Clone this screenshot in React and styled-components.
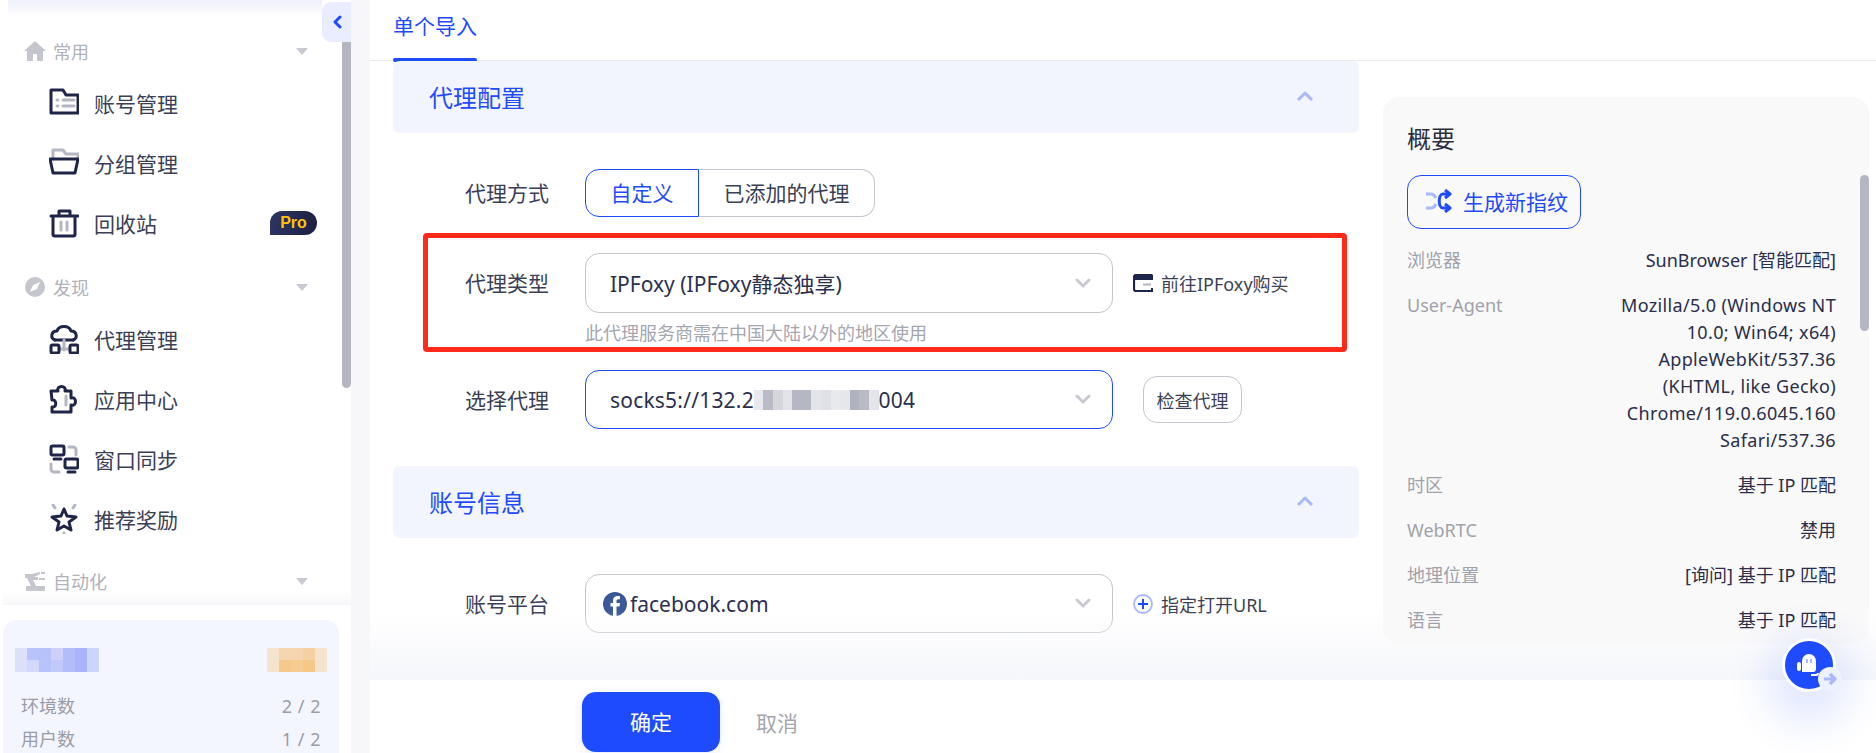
import React from 'react';
import styled, { createGlobalStyle } from 'styled-components';

const NAVY = '#1f2548';
const SOFT = '#b4b6c2';
const BLUE = '#1f4bff';
const PALE = '#a9b8ff';

const GlobalStyle = createGlobalStyle`
  html, body { margin: 0; padding: 0; height: 100%; overflow: hidden; background: #fff; }
  body { font-family: "Noto Sans", "Noto Sans CJK SC", sans-serif; color: #3b3f57; }
  * { box-sizing: border-box; }
`;

const Page = styled.div`
  display: grid;
  grid-template-columns: 351px 19px 1fr;
  grid-template-rows: 753px;
  width: 1876px;
  height: 753px;
  overflow: hidden;
`;

/* sidebar */
const Sidebar = styled.aside`
  position: relative;
  display: flex;
  flex-direction: column;
  min-height: 0;
  background: #fff;
`;

const TopShade = styled.div`
  position: absolute;
  top: 0;
  left: 8px;
  width: 314px;
  height: 16px;
  background: linear-gradient(#eef0fb, #fff);
`;

const Collapse = styled.div`
  position: absolute;
  z-index: 2;
  top: 2px;
  right: 0;
  width: 29px;
  height: 40px;
  display: flex;
  align-items: center;
  justify-content: center;
  background: #e9edff;
  border-radius: 9px 0 0 9px;
`;

const SideThumb = styled.div`
  position: absolute;
  top: 40px;
  right: 0;
  width: 9px;
  height: 348px;
  background: ${SOFT};
  border-radius: 0 0 5px 5px;
`;

const Menu = styled.nav`
  position: relative;
  flex: none;
  height: 605px;
  padding-top: 30px;
  overflow: hidden;
  &::after {
    content: '';
    position: absolute;
    left: 3px;
    right: 0;
    bottom: 0;
    height: 16px;
    background: linear-gradient(rgba(247, 247, 250, 0), #f7f7fa);
  }
`;

const Section = styled.div`
  display: flex;
  align-items: center;
  height: 44px;
  margin-top: ${p => p.$top || 0}px;
  padding: 0 0 2px 24px;
  font-size: 18px;
  color: #b0b2bb;
  svg { flex: none; margin-right: 7px; }
`;

const Caret = styled.span`
  width: 0;
  height: 0;
  margin-left: auto;
  margin-right: 43px;
  border-left: 6px solid transparent;
  border-right: 6px solid transparent;
  border-top: 7px solid #c8c9d2;
`;

const Item = styled.div`
  display: flex;
  align-items: center;
  height: 60px;
  padding: 0 0 2px 49px;
  font-size: 21px;
  color: #3b3f57;
  svg { flex: none; margin-right: 15px; }
`;

const ProBadge = styled.span`
  margin-left: auto;
  margin-right: 34px;
  width: 47px;
  height: 24px;
  display: flex;
  align-items: center;
  justify-content: center;
  font-family: "Liberation Sans", sans-serif;
  font-weight: 700;
  font-size: 16px;
  color: #ffc107;
  background: linear-gradient(100deg, #2d3566, #1b2040);
  border-radius: 12px 12px 12px 0;
`;

const StatsCard = styled.div`
  flex: 1;
  margin: 15px 12px 0 3px;
  padding: 28px 12px 0 12px;
  background: #f3f6ff;
  border-radius: 14px 14px 0 0;
`;

const StatsTop = styled.div`
  display: flex;
  justify-content: space-between;
  margin-bottom: 18px;
`;

const Mosaic = styled.span`
  display: inline-grid;
  grid-template-columns: repeat(${p => p.$cols}, ${p => p.$size}px);
  grid-auto-rows: ${p => p.$rowHeight || p.$size}px;
`;

const Cell = styled.i`
  display: block;
  background: ${p => p.$color};
`;

const StatRow = styled.div`
  display: flex;
  justify-content: space-between;
  height: 33px;
  line-height: 33px;
  padding: 0 6px;
  font-size: 18px;
  color: #9a9ca8;
`;

const StatValue = styled.span`
  letter-spacing: 0.5px;
`;

/* main area */
const Gutter = styled.div`
  background: #f7f7f9;
`;

const Main = styled.main`
  display: flex;
  flex-direction: column;
  min-width: 0;
  min-height: 0;
  background: #fff;
`;

const TabBar = styled.div`
  display: flex;
  flex: none;
  height: 61px;
  padding-left: 23px;
  border-bottom: 1px solid #e9e9ec;
`;

const Tab = styled.div`
  position: relative;
  height: 61px;
  padding-top: 9px;
  font-size: 21px;
  line-height: 34px;
  color: ${BLUE};
  &::after {
    content: '';
    position: absolute;
    left: 0;
    right: 0;
    bottom: -1px;
    height: 4px;
    background: ${BLUE};
    border-radius: 2px;
  }
`;

const Body = styled.div`
  position: relative;
  flex: 1;
  display: flex;
  gap: 24px;
  padding: 0 7px 0 23px;
  min-height: 0;
  &::after {
    content: '';
    position: absolute;
    left: 0;
    right: 0;
    bottom: 0;
    height: 70px;
    background: linear-gradient(rgba(246, 247, 251, 0), #f6f7fb);
    pointer-events: none;
  }
`;

const FormColumn = styled.div`
  position: relative;
  width: 966px;
  flex: none;
  overflow: hidden;
`;

const PanelHeader = styled.div`
  display: flex;
  align-items: center;
  justify-content: space-between;
  height: 72px;
  margin-top: ${p => p.$top || 0}px;
  padding: 0 45px 2px 36px;
  font-size: 24px;
  color: ${BLUE};
  background: #f2f5fe;
  border-radius: 6px;
`;

const FormRow = styled.div`
  display: flex;
  align-items: center;
  margin-top: ${p => p.$top}px;
`;

const Label = styled.label`
  width: 156px;
  margin-right: 36px;
  padding-bottom: 2px;
  flex: none;
  text-align: right;
  font-size: 21px;
  color: #3b3f57;
`;

const Segments = styled.div`
  display: flex;
  height: 48px;
  font-size: 21px;
`;

const Segment = styled.div`
  display: flex;
  align-items: center;
  justify-content: center;
  padding-bottom: 2px;
  width: ${p => (p.$active ? 114 : 176)}px;
  color: ${p => (p.$active ? BLUE : '#3b3f57')};
  border: 1px solid ${p => (p.$active ? BLUE : '#c4c5cd')};
  border-left-width: ${p => (p.$active ? 1 : 0)}px;
  border-radius: ${p => (p.$active ? '14px 0 0 14px' : '0 14px 14px 0')};
`;

const Select = styled.div`
  display: flex;
  align-items: center;
  justify-content: space-between;
  width: 528px;
  height: ${p => p.$height || 60}px;
  padding: 0 21px 0 ${p => p.$pad || 24}px;
  font-size: 21px;
  color: #2c3050;
  border: ${p => (p.$focus ? `1.5px solid ${BLUE}` : '1.5px solid #c4c5cb')};
  border-radius: 14px;
`;

const SelectValue = styled.span`
  display: flex;
  align-items: center;
`;

const ProxyText = styled.span`
  letter-spacing: 0.2px;
`;

const Helper = styled.div`
  margin: 8px 0 0 192px;
  font-size: 18px;
  line-height: 24px;
  color: #a4a6b0;
`;

const Aside = styled.div`
  display: flex;
  align-items: center;
  gap: 8px;
  margin-left: 20px;
  font-size: 18px;
  color: #3b3f57;
`;

const GhostButton = styled.div`
  display: flex;
  align-items: center;
  justify-content: center;
  width: 99px;
  height: 47px;
  margin-left: 30px;
  font-size: 18px;
  color: #3b3f57;
  border: 1px solid #c4c5cd;
  border-radius: 14px;
`;

const Annotation = styled.div`
  position: absolute;
  top: 172px;
  left: 30px;
  width: 924px;
  height: 119px;
  border: 5px solid #ff2a1a;
  border-radius: 4px;
  pointer-events: none;
`;

/* right summary */
const Summary = styled.section`
  position: relative;
  z-index: 1;
  flex: 1;
  align-self: flex-start;
  height: 547px;
  margin-top: 36px;
  padding: 25px 33px 0 24px;
  overflow: hidden;
  background: #f9f9fa;
  border-radius: 16px;
`;

const SummaryThumb = styled.div`
  position: absolute;
  top: 78px;
  right: 0;
  width: 9px;
  height: 156px;
  background: ${SOFT};
  border-radius: 5px;
`;

const SummaryTitle = styled.h2`
  margin: 0;
  font-size: 24px;
  line-height: 34px;
  font-weight: 400;
  color: #2b2e3f;
`;

const NewButton = styled.div`
  display: flex;
  align-items: center;
  gap: 11px;
  width: 174px;
  height: 54px;
  margin: 19px 0 18px;
  padding: 0 0 2px 17px;
  font-size: 21px;
  color: ${BLUE};
  border: 1.5px solid ${BLUE};
  border-radius: 14px;
`;

const InfoRow = styled.div`
  display: flex;
  justify-content: space-between;
  margin-bottom: 18px;
  font-size: 18px;
  line-height: 27px;
`;

const InfoKey = styled.span`
  color: #a0a2ab;
  flex: none;
`;

const InfoValue = styled.span`
  max-width: 240px;
  text-align: right;
  color: #2a2e4a;
  letter-spacing: ${p => (p.$wide ? '0.35px' : 'normal')};
`;

const Footer = styled.footer`
  display: flex;
  flex: none;
  align-items: center;
  height: 73px;
  padding: 0 0 0 212px;
  background: #fff;
`;

const Confirm = styled.div`
  display: flex;
  align-items: center;
  justify-content: center;
  width: 138px;
  height: 60px;
  margin-top: 11px;
  padding-bottom: 2px;
  font-size: 21px;
  color: #fff;
  background: ${BLUE};
  border-radius: 14px;
  box-shadow: 0 2px 10px rgba(31, 75, 255, 0.12);
`;

const Cancel = styled.div`
  margin: 10px 0 0 36px;
  font-size: 21px;
  color: #a4a6b0;
`;

const HelpBubble = styled.div`
  position: absolute;
  z-index: 3;
  top: 638px;
  left: 1782px;
  width: 54px;
  height: 54px;
  display: flex;
  align-items: center;
  justify-content: center;
  background: ${BLUE};
  border: 3px solid #fff;
  border-radius: 50%;
  box-shadow: 0 16px 44px 14px rgba(31, 75, 255, 0.14);
`;

const HelpArrow = styled.div`
  position: absolute;
  right: -9px;
  bottom: -2px;
  width: 24px;
  height: 24px;
  display: flex;
  align-items: center;
  justify-content: center;
  background: #eef1ff;
  border-radius: 50%;
`;

/* icons */
const Svg = ({ size = 30, w, h, children }) => (
  <svg width={w || size} height={h || size} viewBox={`0 0 ${w || size} ${h || size}`} fill="none">
    {children}
  </svg>
);

const navy = { stroke: NAVY, strokeWidth: 3, strokeLinejoin: 'round', strokeLinecap: 'round' };
const soft = { stroke: SOFT, strokeWidth: 3, strokeLinecap: 'round', strokeLinejoin: 'round' };

const HomeIcon = () => (
  <Svg size={22}>
    <path d="M11 1 0 11h3v10h6v-7h4v7h6V11h3z" fill="#c4c5cd" />
  </Svg>
);
const CompassIcon = () => (
  <Svg size={22}>
    <circle cx="11" cy="11" r="10" fill="#c4c5cd" />
    <path d="m16 6-7 3-3 7 7-3z" fill="#fff" />
  </Svg>
);
const RobotIcon = () => (
  <Svg size={22}>
    <path d="M1 4h7l8-2v2l-6 3h4v3H9l3 6H7L3 8H1z M17 2h4v2h-4z M15 8h6v2h-6z" fill="#c4c5cd" />
    <rect x="2" y="16" width="19" height="5" rx="1" fill="#c4c5cd" />
  </Svg>
);
const ListFolderIcon = () => (
  <Svg>
    <path d="M2 2h12l3 5h12v18H2z" {...navy} />
    <path d="M14 12h11M14 18h11" {...soft} />
    <path d="M8 12h1M8 18h1" {...soft} />
  </Svg>
);
const OpenFolderIcon = () => (
  <Svg>
    <path d="M4 11V2h10l3 4h12v5" {...soft} />
    <path d="M1 11h28l-3 14H4z" {...navy} />
  </Svg>
);
const TrashIcon = () => (
  <Svg>
    <path d="M2 8h27M10 7V3h11v4M4 8v18a2 2 0 0 0 2 2h18a2 2 0 0 0 2-2V8" {...navy} />
    <path d="M12 14v8M18 14v8" {...soft} />
  </Svg>
);
const CloudIcon = () => (
  <Svg>
    <path d="M6 16c-5-2-4-9 2-9 2-6 12-6 14 0 6 0 7 7 2 9" {...navy} />
    <path d="M6 16h18" {...navy} />
    <path d="M15 16v10M10 25h10" {...soft} />
    <rect x="2" y="21" width="8" height="8" rx="1.5" {...navy} />
    <rect x="21" y="21" width="8" height="8" rx="1.5" {...navy} />
  </Svg>
);
const PuzzleIcon = () => (
  <Svg>
    <path d="M2 7h7c-2-6 9-6 7 0h6v7c6-2 6 9 0 7v7H3v-5c5 1 5-8 0-7z" {...navy} />
    <path d="M17 12v9" {...soft} />
  </Svg>
);
const SyncIcon = () => (
  <Svg>
    <rect x="2" y="2" width="13" height="9" rx="1.5" {...navy} />
    <path d="M5 15h7" {...navy} />
    <path d="M20 3h4a3 3 0 0 1 3 3v5M2 20v5a3 3 0 0 0 3 3h5" {...soft} />
    <rect x="16" y="15" width="13" height="9" rx="1.5" {...navy} />
    <path d="M19 28h7" {...navy} />
  </Svg>
);
const StarIcon = () => (
  <Svg>
    <path d="m15 5 3 7 9 1-7 5 2 8-7-4-7 4 2-8-7-5 9-1z" {...navy} />
    <path d="M4 1l2 3M26 1l-2 3M15 30v-1" {...soft} />
  </Svg>
);
const ChevronUp = () => (
  <Svg w={18} h={12}>
    <path d="m2 10 7-7 7 7" stroke={PALE} strokeWidth="3" strokeLinejoin="round" />
  </Svg>
);
const ChevronDown = () => (
  <Svg w={16} h={11}>
    <path d="m2 2 6 6 6-6" stroke="#c8c9d0" strokeWidth="3" strokeLinecap="round" />
  </Svg>
);
const ChevronLeft = () => (
  <Svg w={10} h={14}>
    <path d="M8 2 3 7l5 5" stroke={BLUE} strokeWidth="3" strokeLinecap="round" strokeLinejoin="round" />
  </Svg>
);
const WalletIcon = () => (
  <Svg w={20} h={18}>
    <path d="M19 17H3a2 2 0 0 1-2-2V3a2 2 0 0 1 2-2h15a1 1 0 0 1 1 1v3H1" stroke={NAVY} strokeWidth="2.2" />
    <path d="M1 2h18v3H1z" fill={NAVY} />
    <path d="M19 14v3h-3" stroke={NAVY} strokeWidth="2" />
    <path d="M10 10.500h8" stroke={SOFT} strokeWidth="2" />
  </Svg>
);
const PlusCircle = () => (
  <Svg size={20}>
    <circle cx="10" cy="10" r="9" stroke={PALE} strokeWidth="1.8" />
    <path d="M10 5v10M5 10h10" stroke={BLUE} strokeWidth="2" />
  </Svg>
);
const ShuffleIcon = () => (
  <Svg w={27} h={24}>
    <path d="M1 5h5c3 0 4 2 5 4M1 19h5c3 0 4-2 5-4" stroke={PALE} strokeWidth="3" />
    <path d="M23 5h-5c-5 0-5 14 0 14h5" stroke={BLUE} strokeWidth="3" />
    <path d="m20 1 5 4-5 4M20 15l5 4-5 4" stroke={BLUE} strokeWidth="3" strokeLinejoin="round" />
  </Svg>
);
const FacebookIcon = () => (
  <svg width="24" height="24" viewBox="0 0 24 24" style={{ marginRight: 3 }}>
    <circle cx="12" cy="12" r="12" fill="#3b5998" />
    <path d="M13.500 24v-9.500h3l.5-3.500h-3.500V9c0-1 .5-1.700 1.800-1.700H17V4.200C16.600 4.100 15.500 4 14.500 4 12 4 10 5.500 10 8.500V11H7.500v3.500H10V24z" fill="#fff" />
  </svg>
);
const HeadsetIcon = () => (
  <Svg size={28}>
    <path d="M7 21V10a7 7 0 0 1 14 0v8a3 3 0 0 1-3 3H7z" fill="#fff" />
    <rect x="2" y="11" width="4" height="9" rx="2" fill="#fff" />
    <rect x="11" y="8" width="2" height="4" fill={PALE} />
    <rect x="15" y="8" width="2" height="4" fill={PALE} />
    <path d="M16 24h5c1 0 2-1 2-2" stroke="#fff" strokeWidth="2" />
  </Svg>
);
const ArrowRight = () => (
  <Svg size={16}>
    <path d="M2 8h10M8 3l5 5-5 5" stroke={PALE} strokeWidth="3.200" strokeLinejoin="round" />
  </Svg>
);

const bluePixels = ['#dde0fb', '#b9c3fb', '#b7c2fa', '#cfd0f7', '#b3bdfb', '#a9b4fb', '#ccd5fc', '#dde0fb', '#d3d9fb', '#b9c3fb', '#c0c9f9', '#b3bdfb', '#a9b4fb', '#ccd5fc'];
const orangePixels = ['#f5e3cf', '#f5d6b0', '#f5d6b0', '#f5d0a0', '#f5e3d0', '#f5e3cf', '#f5c88c', '#f5cc94', '#f5c888', '#f5e3d0'];
const grayPixels = ['#e8e9ee', '#b9bbc5', '#d4d6dc', '#e2e4e8', '#b5b7c2', '#b5b7c2', '#e4e5ea', '#e0e1e6', '#e8e9ec', '#e6e7eb', '#b0b2bd', '#b8bac4', '#e4e5ea'];

const summaryRows = [
  ['时区', '基于 IP 匹配'],
  ['WebRTC', '禁用'],
  ['地理位置', '[询问] 基于 IP 匹配'],
  ['语言', '基于 IP 匹配'],
];

const pixels = (list) => list.map((color, i) => <Cell key={i} $color={color} />);

const App = () => {
  return (
    <Page>
      <GlobalStyle />
      <Sidebar>
        <TopShade />
        <SideThumb />
        <Collapse><ChevronLeft /></Collapse>
        <Menu>
          <Section><HomeIcon />常用<Caret /></Section>
          <Item><ListFolderIcon />账号管理</Item>
          <Item><OpenFolderIcon />分组管理</Item>
          <Item><TrashIcon />回收站<ProBadge>Pro</ProBadge></Item>
          <Section $top={12}><CompassIcon />发现<Caret /></Section>
          <Item><CloudIcon />代理管理</Item>
          <Item><PuzzleIcon />应用中心</Item>
          <Item><SyncIcon />窗口同步</Item>
          <Item><StarIcon />推荐奖励</Item>
          <Section $top={10}><RobotIcon />自动化<Caret /></Section>
        </Menu>
        <StatsCard>
          <StatsTop>
            <Mosaic $cols={7} $size={12}>{pixels(bluePixels)}</Mosaic>
            <Mosaic $cols={5} $size={12}>{pixels(orangePixels)}</Mosaic>
          </StatsTop>
          <StatRow><span>环境数</span><StatValue>2 / 2</StatValue></StatRow>
          <StatRow><span>用户数</span><StatValue>1 / 2</StatValue></StatRow>
        </StatsCard>
      </Sidebar>
      <Gutter />
      <Main>
        <TabBar><Tab>单个导入</Tab></TabBar>
        <Body>
          <FormColumn>
            <PanelHeader>代理配置<ChevronUp /></PanelHeader>
            <FormRow $top={36}>
              <Label>代理方式</Label>
              <Segments>
                <Segment $active>自定义</Segment>
                <Segment>已添加的代理</Segment>
              </Segments>
            </FormRow>
            <FormRow $top={36}>
              <Label>代理类型</Label>
              <Select>
                <SelectValue>IPFoxy (IPFoxy静态独享)</SelectValue>
                <ChevronDown />
              </Select>
              <Aside><WalletIcon />前往IPFoxy购买</Aside>
            </FormRow>
            <Helper>此代理服务商需在中国大陆以外的地区使用</Helper>
            <FormRow $top={25}>
              <Label>选择代理</Label>
              <Select $focus $height={59}>
                <SelectValue>
                  <ProxyText>socks5://132.2</ProxyText>
                  <Mosaic $cols={13} $size={9.6} $rowHeight={20}>{pixels(grayPixels)}</Mosaic>
                  <ProxyText>004</ProxyText>
                </SelectValue>
                <ChevronDown />
              </Select>
              <GhostButton>检查代理</GhostButton>
            </FormRow>
            <PanelHeader $top={37}>账号信息<ChevronUp /></PanelHeader>
            <FormRow $top={36}>
              <Label>账号平台</Label>
              <Select $pad={17} $height={59}>
                <SelectValue><FacebookIcon />facebook.com</SelectValue>
                <ChevronDown />
              </Select>
              <Aside><PlusCircle />指定打开URL</Aside>
            </FormRow>
            <Annotation />
          </FormColumn>
          <Summary>
            <SummaryThumb />
            <SummaryTitle>概要</SummaryTitle>
            <NewButton><ShuffleIcon />生成新指纹</NewButton>
            <InfoRow><InfoKey>浏览器</InfoKey><InfoValue>SunBrowser [智能匹配]</InfoValue></InfoRow>
            <InfoRow>
              <InfoKey>User-Agent</InfoKey>
              <InfoValue $wide>Mozilla/5.0 (Windows NT 10.0; Win64; x64) AppleWebKit/537.36 (KHTML, like Gecko) Chrome/119.0.6045.160 Safari/537.36</InfoValue>
            </InfoRow>
            {summaryRows.map(([key, value]) => (
              <InfoRow key={key}><InfoKey>{key}</InfoKey><InfoValue>{value}</InfoValue></InfoRow>
            ))}
          </Summary>
        </Body>
        <Footer>
          <Confirm>确定</Confirm>
          <Cancel>取消</Cancel>
        </Footer>
      </Main>
      <HelpBubble>
        <HeadsetIcon />
        <HelpArrow><ArrowRight /></HelpArrow>
      </HelpBubble>
    </Page>
  );
};

export default App;
